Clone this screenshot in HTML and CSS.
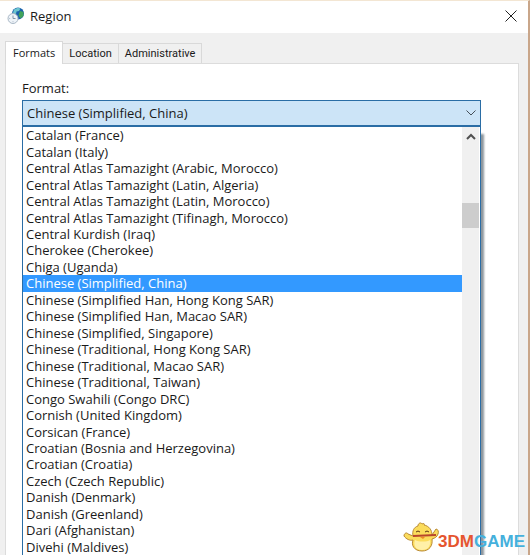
FILE: index.html
```html
<!DOCTYPE html>
<html lang="en">
<head>
  <meta charset="UTF-8">
  <meta name="viewport" content="width=device-width, initial-scale=1.0">
  <title>Region</title>
  <link rel="stylesheet" href="styles.css">
</head>
<body>

<div class="window">
  <header class="title-bar">
    <svg class="app-icon" viewBox="0 0 18 18" aria-hidden="true">
      <circle cx="11" cy="6.5" r="6" fill="#1b61ab"/>
      <path d="M7 2.5C9 .8 12 .4 13.500 1.500L12 4 9.500 4.500 9 7 6 6z" fill="#6cc5cf"/>
      <path d="M13 4l3.500 1v4l-3 2.500-2-3z" fill="#42a35a"/>
      <circle cx="6" cy="11.500" r="5" fill="#eef3f8" stroke="#a9b8c6"/>
      <path d="M6 8.500v3h2.500M6 14.500v.6M2.500 11.500h.6" fill="none" stroke="#8195aa"/>
    </svg>
    <h1 class="title">Region</h1>
    <button class="close" aria-label="Close">
      <svg viewBox="0 0 12 12" aria-hidden="true"><path d="M.5.5l11 11M11.500.5l-11 11"/></svg>
    </button>
  </header>

  <div class="tabs" role="tablist">
    <button class="tab active" role="tab" aria-selected="true">Formats</button>
    <button class="tab" role="tab" aria-selected="false">Location</button>
    <button class="tab" role="tab" aria-selected="false">Administrative</button>
  </div>

  <main class="panel" role="tabpanel">
    <label class="label" for="format">Format:</label>
    <div class="combo">
      <select class="select" id="format">
        <option>Chinese (Simplified, China)</option>
      </select>
      <svg class="arrow" viewBox="0 0 10 6" aria-hidden="true"><path d="M.5.5L5 5 9.500.5"/></svg>
    </div>

    <div class="dropdown">
      <ul class="list" role="listbox" aria-label="Format">
        <li role="option">Catalan (France)</li>
        <li role="option">Catalan (Italy)</li>
        <li role="option">Central Atlas Tamazight (Arabic, Morocco)</li>
        <li role="option">Central Atlas Tamazight (Latin, Algeria)</li>
        <li role="option">Central Atlas Tamazight (Latin, Morocco)</li>
        <li role="option">Central Atlas Tamazight (Tifinagh, Morocco)</li>
        <li role="option">Central Kurdish (Iraq)</li>
        <li role="option">Cherokee (Cherokee)</li>
        <li role="option">Chiga (Uganda)</li>
        <li class="selected" role="option" aria-selected="true">Chinese (Simplified, China)</li>
        <li role="option">Chinese (Simplified Han, Hong Kong SAR)</li>
        <li role="option">Chinese (Simplified Han, Macao SAR)</li>
        <li role="option">Chinese (Simplified, Singapore)</li>
        <li role="option">Chinese (Traditional, Hong Kong SAR)</li>
        <li role="option">Chinese (Traditional, Macao SAR)</li>
        <li role="option">Chinese (Traditional, Taiwan)</li>
        <li role="option">Congo Swahili (Congo DRC)</li>
        <li role="option">Cornish (United Kingdom)</li>
        <li role="option">Corsican (France)</li>
        <li role="option">Croatian (Bosnia and Herzegovina)</li>
        <li role="option">Croatian (Croatia)</li>
        <li role="option">Czech (Czech Republic)</li>
        <li role="option">Danish (Denmark)</li>
        <li role="option">Danish (Greenland)</li>
        <li role="option">Dari (Afghanistan)</li>
        <li role="option">Divehi (Maldives)</li>
      </ul>
      <div class="scrollbar">
        <button class="scroll-up" aria-label="Scroll up">
          <svg viewBox="0 0 10 7" aria-hidden="true"><path d="M1 6l4-4 4 4"/></svg>
        </button>
        <div class="thumb"></div>
      </div>
    </div>
  </main>
</div>

<div class="watermark">
  <svg class="mascot" viewBox="0 0 36 30" aria-hidden="true">
    <path d="M15 4c0-3 3-4 4-2 2-1 3 0 2 1 5 1 8 5 8 10l4-6c2 0 3 3 2 5-1 3-3 4-6 5 1 7-3 12-10 12-8 0-11-6-9-11-3 1-7-1-9-4 0-3 3-4 4-2l5 2C9 9 11 5 15 4z" fill="#fbdc5c" stroke="#b98a35"/>
    <path d="M12 18c4 2 12 2 15 0 1 6-2 10-8 10s-9-4-7-10z" fill="#fff0a8"/>
    <path d="M13 10q2-2 4 0M22 10q2-2 4 0" stroke="#5d3516" fill="none"/>
    <path d="M10 13l23-1v2l-23 1z" fill="#b8452b"/>
    <path d="M17 15h5l-2 2z" fill="#ef8a25"/>
  </svg>
  <span class="brand"><span class="brand-red">3DM</span><span class="brand-blue">GAME</span></span>
</div>

</body>
</html>
```

FILE: styles.css
```css
* {
  box-sizing: border-box;
}

body {
  margin: 0;
  font-family: 'Open Sans', 'Noto Sans', sans-serif;
  font-size: 13px;
  color: #1a1a1a;
}

button {
  border: none;
  padding: 0;
  background: none;
  font: inherit;
  color: inherit;
}

svg {
  display: block;
}

.window {
  display: flex;
  flex-direction: column;
  height: 100vh;
  overflow: hidden;
  background-color: #f0f0f0;
  border-top: 1px solid #f3e6d3;
  border-right: 2px solid #c9a68a;
}

.title-bar {
  display: flex;
  align-items: center;
  flex: none;
  height: 32px;
  padding: 0 11px 2px 7px;
  background-color: #fff;
}

.app-icon {
  width: 18px;
  height: 18px;
}

.title {
  flex: 1;
  margin: 0 0 0 5px;
  font-size: 13px;
  font-weight: normal;
}

.close svg {
  width: 12px;
  height: 12px;
}

.close path {
  stroke: #222;
  fill: none;
}

.tabs {
  display: flex;
  align-items: flex-end;
  flex: none;
  height: 30px;
  padding-left: 5px;
}

.tab {
  height: 20px;
  padding: 0 6px;
  border: 1px solid #d9d9d9;
  border-left: none;
  border-bottom: none;
  font-family: Roboto, 'Liberation Sans', sans-serif;
  font-size: 11px;
}

/* the active tab covers the top border of the panel */
.tab.active {
  z-index: 1;
  height: 23px;
  margin-bottom: -1px;
  padding: 0 7px 2px;
  border-left: 1px solid #d9d9d9;
  background-color: #fff;
  font-family: inherit;
}

.panel {
  display: flex;
  flex-direction: column;
  flex: 1;
  min-height: 0;
  margin: 0 9px 0 5px;
  padding: 16px 37px 0 16px;
  background-color: #fff;
  border: 1px solid #dcdcdc;
  border-bottom: none;
}

.label {
  height: 20px;
  line-height: 16px;
}

.combo {
  position: relative;
  flex: none;
}

.select {
  display: block;
  appearance: none;
  width: 100%;
  height: 26px;
  padding: 0 4px;
  border: 1px solid #2a6da5;
  border-radius: 0;
  background-color: #cce4f7;
  font: inherit;
  color: inherit;
}

.arrow {
  position: absolute;
  top: 10px;
  right: 5px;
  width: 10px;
  height: 6px;
  pointer-events: none;
}

.arrow path {
  stroke: #454f58;
  fill: none;
}

.dropdown {
  display: flex;
  flex: 1;
  min-height: 0;
  padding-right: 1px;
  border: 1px solid #2a6da5;
  border-bottom: none;
  box-shadow: 3px 8px 2px #8c959c;
}

/* rows share the height of the popup */
.list {
  display: grid;
  grid-auto-rows: 1fr;
  flex: 1;
  margin: 0;
  padding: 0;
  list-style: none;
}

.list li {
  display: flex;
  align-items: center;
  min-height: 0;
  padding-left: 3px;
  line-height: 16px;
  white-space: nowrap;
}

.list .selected {
  background-color: #3399ff;
  color: #fff;
}

.scrollbar {
  width: 17px;
  background-color: #f0f0f0;
}

.scroll-up {
  display: flex;
  align-items: center;
  justify-content: center;
  width: 100%;
  height: 18px;
}

.scroll-up svg {
  width: 10px;
  height: 7px;
}

.scroll-up path {
  stroke: #505050;
  stroke-width: 2;
  fill: none;
}

.thumb {
  height: 25px;
  margin-top: 58px;
  background-color: #cdcdcd;
}

.watermark {
  position: absolute;
  right: 5px;
  bottom: 3px;
  display: flex;
  align-items: flex-end;
}

.mascot {
  width: 36px;
  height: 30px;
}

.brand {
  margin-left: -1px;
  font-family: 'Liberation Sans', Arial, sans-serif;
  font-size: 17px;
  font-weight: bold;
  line-height: 20px;
}

.brand-red {
  color: #e5552f;
}

.brand-blue {
  color: #45b0dc;
}
```
